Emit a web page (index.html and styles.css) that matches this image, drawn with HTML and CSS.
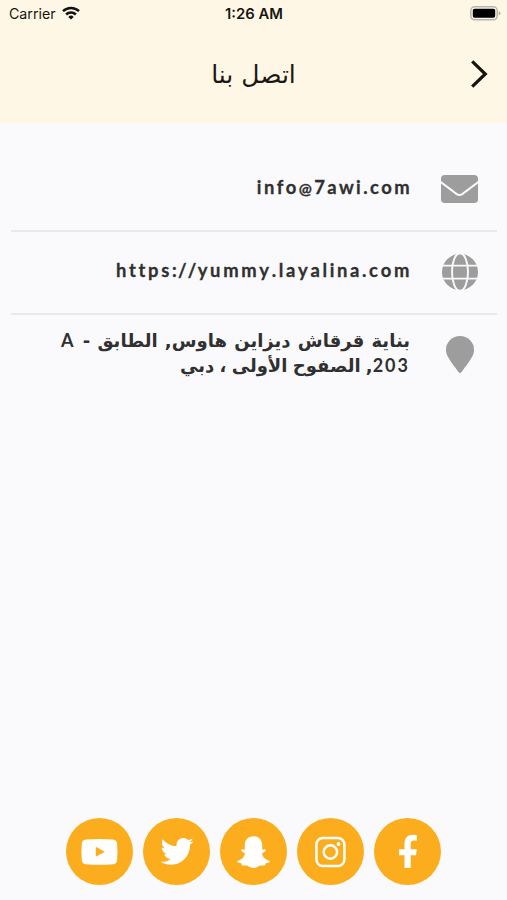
FILE: index.html
```html
<!DOCTYPE html>
<html lang="ar" dir="rtl">
<head>
<meta charset="utf-8">
<title>اتصل بنا</title>
<link rel="stylesheet" href="styles.css">
</head>
<body>
<div class="screen">
  <header class="header">
    <div class="status" dir="ltr">
      <div class="carrier"><span>Carrier</span>
        <svg class="wifi" viewBox="0 0 18 14"><g fill="none" stroke="#111" stroke-width="2.5"><path d="M1 5.2a11.4 11.4 0 0 1 16 0"/><path d="M4.1 8.5a7 7 0 0 1 9.8 0"/></g><path d="M9 13.6 6.3 10.9a3.8 3.8 0 0 1 5.4 0z" fill="#111"/></svg>
      </div>
      <div class="time">1:26 AM</div>
      <svg class="battery" viewBox="0 0 31 15"><rect x=".8" y=".8" width="26.4" height="13" rx="3.8" fill="#fff7e6" stroke="#bab5a8" stroke-width="1.5"/><rect x="2.8" y="2.8" width="22.4" height="9" rx="1.8" fill="#000"/><path d="M28.6 5.2q2 .7 2 2.1t-2 2.1z" fill="#bab5a8"/></svg>
    </div>
    <div class="nav">
      <svg class="back" viewBox="0 0 18 30"><path d="M2.200 2.300 15.300 15 2.200 27.700" fill="none" stroke="#17140f" stroke-width="3.200"/></svg>
      <h1 class="title">اتصل بنا</h1>
    </div>
  </header>
  <main class="contacts">
    <div class="row">
      <div class="icon"><svg class="mail" viewBox="0 0 37 28"><rect width="37" height="28" rx="3.8" fill="#9d9d9d"/><path d="M-1 6.600 15.800 19.100Q18.500 21 21.200 19.100L38 6.600" fill="none" stroke="#fafafc" stroke-width="2"/></svg></div>
      <p class="latin" dir="ltr">info<span class="at">@</span>7awi.com</p>
    </div>
    <div class="row">
      <div class="icon"><svg class="globe" viewBox="0 0 36 36"><circle cx="18" cy="18" r="18" fill="#9d9d9d"/><g fill="none" stroke="#fafafc" stroke-width="1.9"><ellipse cx="18" cy="18" rx="8" ry="18.8"/><path d="M0 11.600h36M0 24.600h36"/></g></svg></div>
      <p class="latin url" dir="ltr">https<span class="slashes">://</span>yummy.layalina.com</p>
    </div>
    <div class="row">
      <div class="icon"><svg class="pin" viewBox="0 0 28 37"><path d="M14 0A14 14 0 0 0 0 14c0 5.200 3.200 9.700 12.600 22.200q1.400 1.600 2.800 0C24.800 23.700 28 19.200 28 14A14 14 0 0 0 14 0z" fill="#9d9d9d"/></svg></div>
      <p class="address"><span class="line1">بناية قرقاش ديزاين هاوس, الطابق - <span class="en">A</span></span><br><span class="line2"><span class="en">203</span>, الصفوح الأولى ، دبي</span></p>
    </div>
  </main>
  <footer class="social">
    <div class="circle"><svg viewBox="0 0 67 67"><path d="M30.500 50V37.300h-5.500v-6h5.500v-5.200c0-6.500 3.400-9.300 8.600-9.300 1.500 0 2.900.2 3.800.4v5.400h-2.800c-2.600 0-3.400 1.300-3.400 3.300v5.400h6.100l-.8 6h-5.300V50z" fill="#fff"/></svg></div>
    <div class="circle"><svg viewBox="0 0 67 67"><g fill="none" stroke="#fff" stroke-width="2.500"><rect x="19.400" y="20" width="28" height="28" rx="6.500"/><circle cx="33.400" cy="34" r="6.700"/></g><circle cx="41.500" cy="26" r="1.900" fill="#fff"/></svg></div>
    <div class="circle"><svg viewBox="0 0 67 67"><path d="M33.500 18.300c5.700 0 8.800 4 8.800 9.200l-.2 4.100c1.100.5 2.300-.8 3.300-.1.800.8.200 1.900-1.500 2.700-1.200.6-2 1-1.700 2.200 1 3.200 3.500 5.300 7 6.300.9.300.6 1.500-.3 1.900-1.400.6-3.100.6-3.400 1.200-.3.700 0 1.700-1 1.800-1.700.1-3.400-.6-5 .2-1.900 1-3.400 2.300-6 2.300s-4.100-1.300-6-2.300c-1.600-.8-3.300-.1-5-.2-1-.1-.7-1.100-1-1.800-.3-.6-2-.6-3.400-1.200-.9-.4-1.200-1.600-.3-1.900 3.500-1 6-3.100 7-6.300.3-1.200-.5-1.600-1.700-2.200-1.700-.8-2.300-1.900-1.500-2.700 1-.7 2.200.6 3.300.1l-.2-4.100c0-5.200 3.100-9.200 8.800-9.200z" fill="#fff"/></svg></div>
    <div class="circle"><svg viewBox="0 0 67 67"><path transform="translate(16.100 16) scale(1.450)" d="M23.643 4.937c-.835.370-1.732.620-2.675.733.962-.576 1.700-1.490 2.048-2.578-.900.534-1.897.922-2.958 1.130-.850-.904-2.060-1.470-3.400-1.470-2.572 0-4.658 2.086-4.658 4.660 0 .364.042.718.120 1.060-3.873-.195-7.304-2.050-9.602-4.868-.400.690-.630 1.490-.630 2.342 0 1.616.823 3.043 2.072 3.878-.764-.025-1.482-.234-2.110-.583v.060c0 2.257 1.605 4.140 3.737 4.568-.392.106-.803.162-1.227.162-.300 0-.593-.028-.877-.082.593 1.850 2.313 3.198 4.352 3.234-1.595 1.250-3.604 1.995-5.786 1.995-.376 0-.747-.022-1.112-.065 2.062 1.323 4.510 2.093 7.140 2.093 8.570 0 13.255-7.098 13.255-13.254 0-.200-.005-.402-.014-.602.910-.658 1.700-1.477 2.323-2.410z" fill="#fff"/></svg></div>
    <div class="circle"><svg viewBox="0 0 67 67"><path d="M20 21.600Q33.500 20.500 47 21.600q4 .4 4.100 4.400.8 8 0 16-.3 4-4.100 4.300-13.500 1-27 0-4-.3-4.200-4.300-.8-8 0-16 .2-4 4.200-4.400z" fill="#fff"/><path d="M29.800 28.800v10l9-5z" fill="#fbad1e"/></svg></div>
  </footer>
</div>
</body>
</html>
```
FILE: styles.css
```css
* { box-sizing: border-box; }
body { margin: 0; background: #fafafc; font-family: Lato, "DejaVu Sans", sans-serif; color: #303030; }
svg { display: block; }
.screen { height: 900px; display: flex; flex-direction: column; }
.header { height: 123px; background: #fff7e6; }
.status { height: 27px; padding: 0 7px 0 9px; display: grid; grid-template-columns: 1fr auto 1fr; align-items: center; font-family: Inter, sans-serif; color: #171510; }
.carrier { display: flex; align-items: center; gap: 6px; font-size: 14.2px; }
.wifi { width: 18px; height: 14px; margin-top: -1px; }
.time { font-size: 14.8px; font-weight: 600; margin-right: 1px; }
.battery { width: 31px; height: 15px; justify-self: end; margin-right: -1px; }
.nav { height: 94px; padding: 0 19px; display: grid; grid-template-columns: 18px 1fr 18px; align-items: center; }
.back { width: 18px; height: 30px; }
.title { margin: 0; font: 400 25px "DejaVu Sans", sans-serif; color: #1b1813; text-align: center; white-space: nowrap; }
.contacts { padding: 26px 10px 0 11px; flex: 1; }
.row { height: 83px; display: flex; align-items: center; border-bottom: 2px solid #e9e9eb; }
.row:last-child { border-bottom: 0; }
.icon { width: 75px; margin-left: 1px; flex: none; display: flex; justify-content: center; margin-top: -2px; }
.mail { width: 37px; height: 28px; }
.globe { width: 36px; height: 36px; }
.pin { width: 28px; height: 37px; margin-top: -3px; }
p { margin: 0 12px 0 0; white-space: nowrap; }
.latin { font-size: 18.4px; font-weight: 700; letter-spacing: 2.4px; font-kerning: none; -webkit-text-stroke: .3px; margin-top: -6px; margin-right: 9px; }
.url { letter-spacing: 2.68px; }
.at { font-size: 15.5px; }
.slashes { letter-spacing: 1.3px; }
.address { font: 700 18px/25px "DejaVu Sans", sans-serif; margin-top: -8px; margin-right: 11px; }
.line1 { word-spacing: 1px; }
.line2 { word-spacing: -1px; }
.en { font-family: Lato, sans-serif; letter-spacing: 2px; }
.social { height: 82px; display: flex; justify-content: center; gap: 10px; }
.circle { width: 67px; height: 67px; border-radius: 50%; background: #fbad1e; }
```
